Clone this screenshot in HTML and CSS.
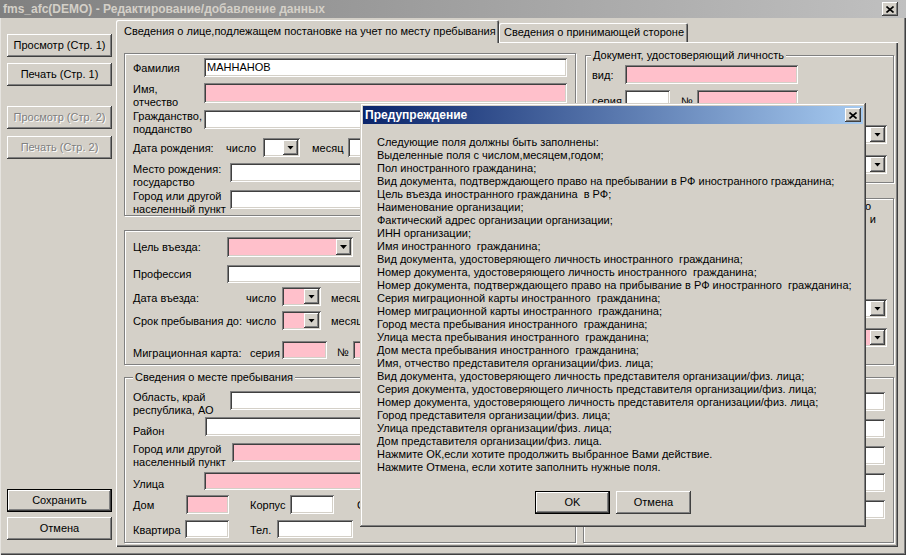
FILE: index.html
```html
<!DOCTYPE html>
<html lang="ru">
<head>
<meta charset="utf-8">
<title>fms_afc(DEMO)</title>
<link rel="stylesheet" href="styles.css">
</head>
<body>
<div class="window">
  <div class="titlebar">
    <span class="title">fms_afc(DEMO) - Редактирование/добавление данных</span>
    <span class="cap-btn"><svg width="8" height="7" viewBox="0 0 8 7"><path d="M0.5 0.5L7.5 6.5M7.5 0.5L0.5 6.5" stroke="#000" stroke-width="1.6" fill="none"/></svg></span>
  </div>
  <div class="client">
    <aside class="sidebar">
      <button class="btn">Просмотр (Стр. 1)</button>
      <button class="btn mt6">Печать (Стр. 1)</button>
      <button class="btn mt20" disabled>Просмотр (Стр. 2)</button>
      <button class="btn mt7" disabled>Печать (Стр. 2)</button>
      <button class="btn default push">Сохранить</button>
      <button class="btn mt5">Отмена</button>
    </aside>
    <section class="tabs">
      <div class="tab-strip">
        <div class="tab active">Сведения о лице,подлежащем постановке на учет по месту пребывания</div>
        <div class="tab second">Сведения о принимающей стороне</div>
      </div>
      <div class="tab-panel">
        <div class="col col-left">
          <div class="group g-person">
            <div class="row"><span class="lbl w71 pt4">Фамилия</span><span class="field grow">МАННАНОВ</span></div>
            <div class="row mt6"><span class="lbl w71">Имя,<br>отчество</span><span class="field pink grow h20"></span></div>
            <div class="row mt1"><span class="lbl w71">Гражданство,<br>подданство</span><span class="field grow"></span></div>
            <div class="row mt2"><span class="lbl w93 pt4">Дата рождения:</span><span class="lbl w37 pt4">число</span><span class="field combo w37"><span class="dd"></span></span><span class="lbl ml12 w36 pt4">месяц</span><span class="field combo w90"><span class="dd"></span></span></div>
            <div class="row mt6"><span class="lbl w97">Место рождения:<br>государство</span><span class="field grow"></span></div>
            <div class="row mt1"><span class="lbl w97">Город или другой<br>населенный пункт</span><span class="field grow"></span></div>
          </div>

          <div class="group g-entry">
            <div class="row"><span class="lbl w94 pt4">Цель въезда:</span><span class="field combo pink w126 h20"><span class="dd"></span></span></div>
            <div class="row mt8"><span class="lbl w94 pt3">Профессия</span><span class="field grow h18"></span></div>
            <div class="row mt4"><span class="lbl w113 pt5">Дата въезда:</span><span class="lbl w36 pt5">число</span><span class="field combo pink w39"><span class="dd"></span></span><span class="lbl ml10 w36 pt5">месяц</span><span class="field combo pink w90"><span class="dd"></span></span></div>
            <div class="row mt5"><span class="lbl w113 pt4">Срок пребывания до:</span><span class="lbl w36 pt4">число</span><span class="field combo pink w39"><span class="dd"></span></span><span class="lbl ml10 w36 pt4">месяц</span><span class="field combo pink w90"><span class="dd"></span></span></div>
            <div class="row mt11"><span class="lbl w117 pt6">Миграционная карта:</span><span class="lbl w32 pt6">серия</span><span class="field pink w45 h18"></span><span class="lbl ml10 w16 pt5">№</span><span class="field pink w107 h18"></span></div>
          </div>

          <div class="group g-stay">
            <div class="caption">Сведения о месте пребывания</div>
            <div class="row mt7"><span class="lbl w97">Область, край<br>республика, АО</span><span class="field grow"></span></div>
            <div class="row"><span class="lbl w72 pt8">Район</span><span class="field grow"></span></div>
            <div class="row mt5"><span class="lbl w99">Город или другой<br>населенный пункт</span><span class="field pink grow"></span></div>
            <div class="row mt3"><span class="lbl w71 pt6">Улица</span><span class="field pink grow h18"></span></div>
            <div class="row mt4"><span class="lbl w53 pt4">Дом</span><span class="field pink w43"></span><span class="lbl ml21 w40 pt4">Корпус</span><span class="field w44"></span><span class="lbl ml23 pt4">С</span></div>
            <div class="row mt6"><span class="lbl w52 pt4">Квартира</span><span class="field w44 h18"></span><span class="lbl ml21 w27 pt4">Тел.</span><span class="field w76 h18"></span></div>
          </div>
        </div>

        <div class="col col-right">
          <div class="group g-doc">
            <div class="caption">Документ, удостоверяющий личность</div>
            <div class="row mt3"><span class="lbl w33 pt4">вид:</span><span class="field pink w173"></span></div>
            <div class="row mt6"><span class="lbl w33 pt5">серия</span><span class="field w45"></span><span class="lbl ml11 w16 pt5">№</span><span class="field pink w101"></span></div>
            <div class="row mt16"><span class="field combo w150 push-right"><span class="dd"></span></span></div>
            <div class="row mt11"><span class="field combo w150 push-right"><span class="dd"></span></span></div>
          </div>

          <div class="group g-right">
            <div class="note n1">о</div>
            <div class="note n2">и</div>
            <div class="row mt73"><span class="field combo w150 push-right"><span class="dd"></span></span></div>
            <div class="row mt10"><span class="field combo pink w150 push-right"><span class="dd"></span></span></div>
          </div>

          <div class="group g-addr">
            <div class="row"><span class="field w150 push-right"></span></div>
            <div class="row mt8"><span class="field w150 push-right"></span></div>
            <div class="row mt8"><span class="field w150 push-right"></span></div>
            <div class="row mt8"><span class="field w150 push-right"></span></div>
            <div class="row mt8"><span class="field w150 push-right"></span></div>
          </div>
        </div>
      </div>
    </section>
  </div>

  <div class="dialog">
    <div class="dlg-title">
      <span>Предупреждение</span>
      <span class="cap-btn"><svg width="8" height="7" viewBox="0 0 8 7"><path d="M0.5 0.5L7.5 6.5M7.5 0.5L0.5 6.5" stroke="#000" stroke-width="1.6" fill="none"/></svg></span>
    </div>
    <div class="dlg-body">
      <div class="line">Следующие поля должны быть заполнены:</div>
      <div class="line">Выделенные поля с числом,месяцем,годом;</div>
      <div class="line">Пол иностранного гражданина;</div>
      <div class="line">Вид документа, подтверждающего право на пребывании в РФ иностранного гражданина;</div>
      <div class="line">Цель въезда иностранного гражданина  в РФ;</div>
      <div class="line">Наименование организации;</div>
      <div class="line">Фактический адрес организации организации;</div>
      <div class="line">ИНН организации;</div>
      <div class="line">Имя иностранного  гражданина;</div>
      <div class="line">Вид документа, удостоверяющего личность иностранного  гражданина;</div>
      <div class="line">Номер документа, удостоверяющего личность иностранного  гражданина;</div>
      <div class="line">Номер документа, подтверждающего право на прибывание в РФ иностранного  гражданина;</div>
      <div class="line">Серия миграционной карты иностранного  гражданина;</div>
      <div class="line">Номер миграционной карты иностранного  гражданина;</div>
      <div class="line">Город места пребывания иностранного  гражданина;</div>
      <div class="line">Улица места пребывания иностранного  гражданина;</div>
      <div class="line">Дом места пребывания иностранного  гражданина;</div>
      <div class="line">Имя, отчество представителя организации/физ. лица;</div>
      <div class="line">Вид документа, удостоверяющего личность представителя организации/физ. лица;</div>
      <div class="line">Серия документа, удостоверяющего личность представителя организации/физ. лица;</div>
      <div class="line">Номер документа, удостоверяющего личность представителя организации/физ. лица;</div>
      <div class="line">Город представителя организации/физ. лица;</div>
      <div class="line">Улица представителя организации/физ. лица;</div>
      <div class="line">Дом представителя организации/физ. лица.</div>
      <div class="line">Нажмите ОК,если хотите продолжить выбранное Вами действие.</div>
      <div class="line">Нажмите Отмена, если хотите заполнить нужные поля.</div>
    </div>
    <div class="dlg-buttons">
      <button class="btn default dlg-btn">OK</button>
      <button class="btn dlg-btn">Отмена</button>
    </div>
  </div>
</div>
</body>
</html>
```

FILE: styles.css
```css
* { box-sizing: border-box; }
html, body { margin: 0; padding: 0; }
body {
  width: 906px; height: 555px; overflow: hidden;
  background: #d4d0c8;
  font-family: "Liberation Sans", Arial, sans-serif;
  font-size: 11px; line-height: 13px; color: #000;
}

.window {
  position: relative;
  width: 906px; height: 555px;
  display: flex; flex-direction: column;
  background: #d4d0c8;
  box-shadow: inset 1px 0 #e6e4e0, inset -1px -1px #404040, inset -2px -2px #808080;
}

/* caption bar */
.titlebar {
  flex: none; height: 18px;
  display: flex; align-items: center; justify-content: space-between;
  padding: 0 8px 0 3px;
  background: linear-gradient(to right, #808080, #c0c0c0);
}
.title { color: #d4d0c8; font-weight: bold; font-size: 12px; }
.cap-btn {
  flex: none; width: 16px; height: 14px;
  display: flex; align-items: center; justify-content: center;
  background: #d4d0c8;
  box-shadow: inset -1px -1px #404040, inset 1px 1px #fff, inset -2px -2px #808080;
}

.client { flex: 1; min-height: 0; display: flex; padding: 0 8px 8px 0; }

/* left buttons */
.sidebar {
  flex: none; width: 116px;
  display: flex; flex-direction: column;
  padding: 16px 0 7px 7px;
}
.btn {
  flex: none; width: 105px; height: 23px;
  padding: 0; border: 0; margin-left: 0; margin-right: 0;
  background: #d4d0c8; color: #000;
  font: inherit; line-height: 13px;
  box-shadow: inset -1px -1px #404040, inset 1px 1px #fff, inset -2px -2px #808080, inset 2px 2px #d4d0c8;
}
.btn:disabled { color: #808080; text-shadow: 1px 1px #fff; }
.btn.default {
  box-shadow: inset 0 0 0 1px #000, inset -2px -2px #404040, inset 2px 2px #fff, inset -3px -3px #808080;
}
.push { margin-top: auto; }

/* tabs */
.tabs { flex: 1; min-width: 0; display: flex; flex-direction: column; }
.tab-strip { flex: none; height: 24px; display: flex; align-items: flex-end; }
.tab {
  flex: none; height: 19px; padding: 0 5px;
  line-height: 19px; white-space: nowrap;
  background: #d4d0c8;
  border-radius: 2px 2px 0 0;
  box-shadow: inset 1px 1px #fff, inset -1px 0 #404040, inset -2px 0 #808080;
}
.tab.second { width: 189px; }
.tab.active {
  position: relative; z-index: 1;
  width: 383px; height: 23px; margin-bottom: -1px;
  padding-left: 8px; line-height: 22px;
}
.tab-panel {
  flex: 1; min-height: 0;
  display: flex; gap: 7px;
  padding: 10px 0 0 7px;
  border-top: 1px solid #fff; border-left: 1px solid #fff;
  box-shadow: inset -1px -1px #404040, inset -2px -2px #808080;
}
.col { flex: none; display: flex; flex-direction: column; }
.col-left { width: 452px; }
.col-right { width: 311px; }

/* group boxes */
.group {
  flex: none;
  display: flex; flex-direction: column;
  padding: 0 8px;
  border: 1px solid #808080;
  box-shadow: inset 1px 1px #fff, 1px 1px #fff;
}
.caption {
  flex: none; align-self: flex-start;
  margin-top: -7px; padding: 0 2px;
  background: #d4d0c8; white-space: nowrap;
}
.g-person { height: 163px; padding-top: 4px; }
.g-entry { height: 135px; margin-top: 14px; padding-top: 6px; }
.g-stay { height: 166px; margin-top: 12px; }
.g-doc { height: 128px; margin-top: 2px; margin-left: 2px; padding: 0 6px; }
.g-doc .caption { margin-left: -1px; }
.g-right { height: 167px; margin-top: 15px; padding: 1px 6px 0 6px; }
.g-addr { height: 166px; margin-top: 12px; padding: 14px 8px 0 6px; }

.note { white-space: nowrap; text-align: right; }
.note.n1 { padding-right: 16px; }
.note.n2 { padding-right: 11px; }

/* rows and controls */
.row { flex: none; display: flex; align-items: flex-start; }
.lbl { flex: none; white-space: nowrap; }
.field {
  flex: none; height: 19px;
  padding: 3px 0 0 3px;
  background: #fff; white-space: nowrap; overflow: hidden;
  box-shadow: inset 1px 1px #808080, inset -1px -1px #fff, inset 2px 2px #404040, inset -2px -2px #d4d0c8;
}
.field.pink { background: #ffc0cb; }
.grow { flex: 1; }
.push-right { margin-left: auto; }
.h18 { height: 18px; }
.h20 { height: 20px; }
.combo { display: flex; justify-content: flex-end; padding: 2px; }
.dd {
  flex: none; width: 15px; height: 100%;
  display: flex; align-items: center; justify-content: center;
  background: #d4d0c8;
  box-shadow: inset -1px -1px #404040, inset 1px 1px #fff, inset -2px -2px #808080;
}
.dd::after {
  content: ""; width: 7px; height: 4px; background: #000;
  clip-path: polygon(0 0, 100% 0, 50% 100%);
}

/* widths */
.w16 { width: 16px; } .w27 { width: 27px; } .w32 { width: 32px; } .w33 { width: 33px; }
.w36 { width: 36px; } .w37 { width: 37px; } .w39 { width: 39px; } .w40 { width: 40px; }
.w43 { width: 43px; } .w44 { width: 44px; } .w45 { width: 45px; } .w52 { width: 52px; }
.w53 { width: 53px; } .w71 { width: 71px; } .w72 { width: 72px; } .w76 { width: 76px; }
.w90 { width: 90px; } .w93 { width: 93px; } .w94 { width: 94px; } .w97 { width: 97px; }
.w99 { width: 99px; } .w101 { width: 101px; } .w107 { width: 107px; } .w113 { width: 113px; }
.w117 { width: 117px; } .w126 { width: 126px; } .w150 { width: 150px; } .w173 { width: 173px; }

/* spacing */
.mt1 { margin-top: 1px; } .mt2 { margin-top: 2px; } .mt3 { margin-top: 3px; } .mt4 { margin-top: 4px; }
.mt5 { margin-top: 5px; } .mt6 { margin-top: 6px; } .mt7 { margin-top: 7px; } .mt8 { margin-top: 8px; }
.mt10 { margin-top: 10px; } .mt11 { margin-top: 11px; } .mt16 { margin-top: 16px; } .mt20 { margin-top: 20px; }
.mt73 { margin-top: 73px; }
.ml10 { margin-left: 10px; } .ml11 { margin-left: 11px; } .ml12 { margin-left: 12px; }
.ml21 { margin-left: 21px; } .ml23 { margin-left: 23px; }
.pt3 { padding-top: 3px; } .pt4 { padding-top: 4px; } .pt5 { padding-top: 5px; } .pt6 { padding-top: 6px; }
.pt8 { padding-top: 8px; }

/* warning dialog */
.dialog {
  position: absolute; left: 360px; top: 103px; z-index: 5;
  width: 506px; height: 424px; padding: 3px;
  display: flex; flex-direction: column;
  background: #d4d0c8;
  box-shadow: inset -1px -1px #404040, inset 1px 1px #d4d0c8, inset -2px -2px #808080, inset 2px 2px #fff;
}
.dlg-title {
  flex: none; height: 18px;
  display: flex; align-items: center; justify-content: space-between;
  padding: 0 2px;
  background: linear-gradient(to right, #0a246a, #a6caf0);
  color: #fff; font-weight: bold; font-size: 12px;
}
.dlg-body { flex: none; padding: 12px 0 0 14px; }
.line { white-space: pre; }
.dlg-buttons { flex: none; display: flex; justify-content: center; gap: 6px; margin-top: 17px; }
.dlg-btn { width: 75px; }
```
